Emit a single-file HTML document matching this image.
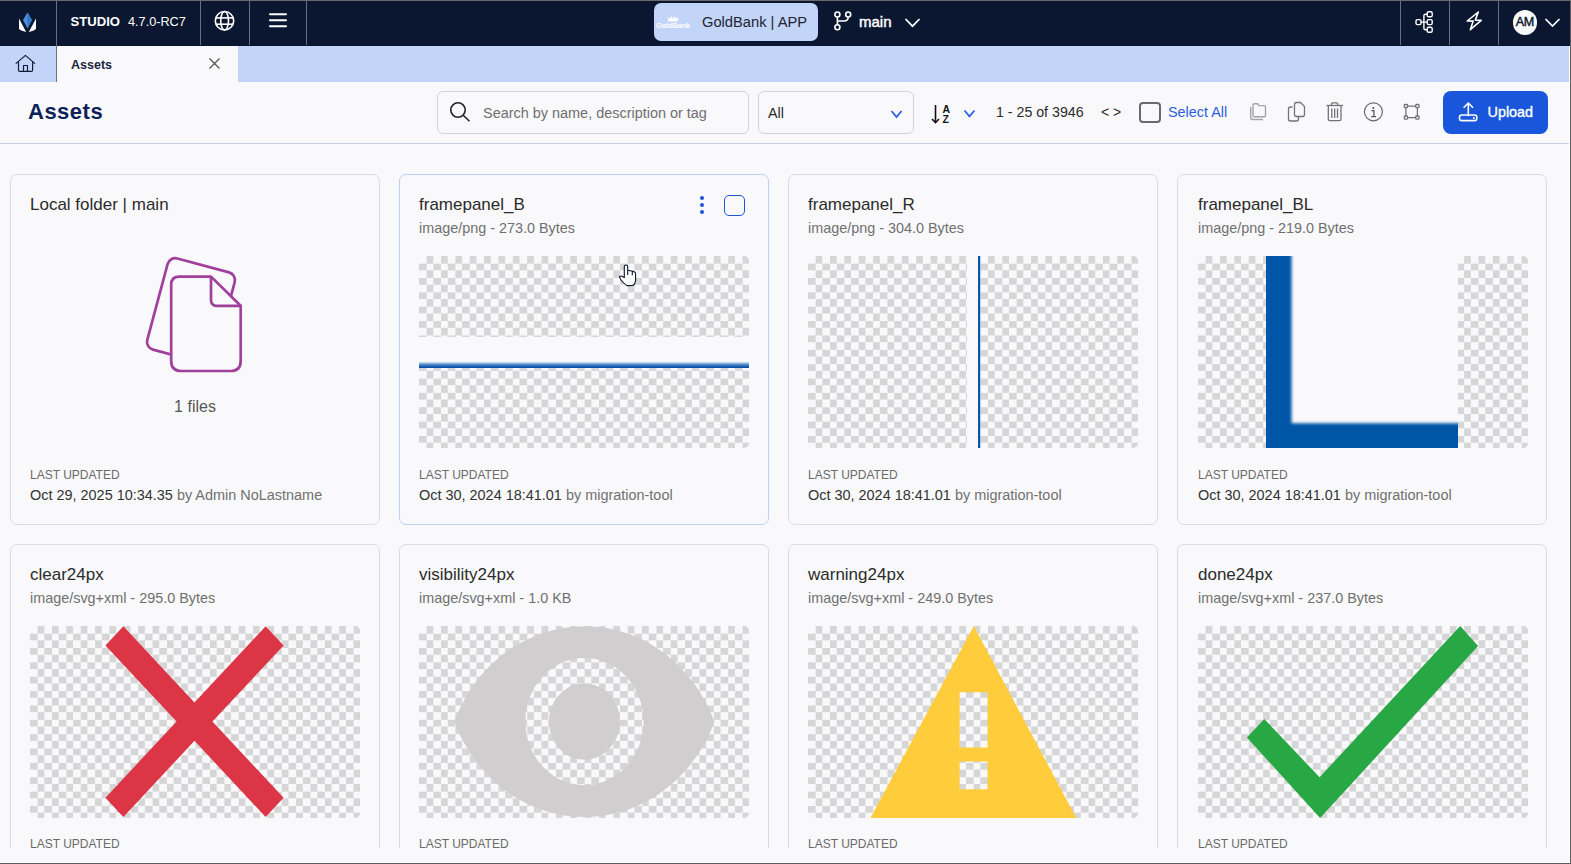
<!DOCTYPE html>
<html><head><meta charset="utf-8">
<style>
*{box-sizing:border-box;margin:0;padding:0}
html,body{width:1571px;height:864px;overflow:hidden;background:#f9f9fb;font-family:"Liberation Sans",sans-serif;color:#2b2b2b}
#frame{position:absolute;left:0;top:0;width:1571px;height:864px;border-top:1px solid #6a6a6a;border-right:1px solid #5e5e5e;border-bottom:1px solid #5e5e5e;pointer-events:none;z-index:50}
#frame2{position:absolute;left:0;top:46px;width:1570px;height:817px;border-right:1px solid #fff;border-bottom:1px solid #fff;pointer-events:none;z-index:49}
.abs{position:absolute}
#nav{position:absolute;left:0;top:0;width:1571px;height:46px;background:#0b1730}
.sep{position:absolute;top:0;width:1px;background:#6b6f78}
#tabs{position:absolute;left:0;top:46px;width:1571px;height:36px;background:#c2d4f8}
#hdr{position:absolute;left:0;top:82px;width:1571px;height:62px;border-bottom:1px solid #c9d2e6}
.card{position:absolute;width:370px;height:351px;border:1px solid #dcdce0;border-radius:7px;background:#f9f9fb}
.card .t{position:absolute;left:19px;top:20px;font-size:17px;color:#2b2b2b;white-space:nowrap}
.card .s{position:absolute;left:19px;top:44.5px;font-size:14.4px;color:#707070;white-space:nowrap}
.card .pv{position:absolute;left:9px;top:81px;width:330px;height:192px;border-radius:5px;overflow:hidden;
 background-color:#f9f9fb;
 background-image:linear-gradient(45deg,#d6d6d6 25%,transparent 25%,transparent 75%,#d6d6d6 75%),linear-gradient(45deg,#d6d6d6 25%,transparent 25%,transparent 75%,#d6d6d6 75%);
}
.card .lu{position:absolute;left:19px;top:293px;font-size:12px;color:#6a6a6a;white-space:nowrap}
.card .d{position:absolute;left:19px;top:311.5px;font-size:14.45px;color:#333;white-space:nowrap}
.card .d span{color:#707070}
.pvw{position:absolute;width:330px;height:192px;border-radius:5px;overflow:hidden;z-index:2}
.pvw svg{display:block}
.kb{position:absolute;left:300px;top:21px;width:4px;height:18px}
.kb i{display:block;width:4px;height:4px;border-radius:50%;background:#1a56db;margin-bottom:3px}
.cb{position:absolute;left:324px;top:20px;width:21px;height:21px;border:1.6px solid #1a56db;border-radius:5px}
#scroll{position:absolute;left:0;top:144px;width:1569px;height:704px;overflow:hidden}
</style></head><body>
<div id="nav">
  <div class="sep" style="left:56px;height:82px"></div>
  <div class="sep" style="left:200px;height:45px"></div>
  <div class="sep" style="left:249px;height:45px"></div>
  <div class="sep" style="left:306px;height:45px"></div>
  <div class="sep" style="left:1400px;height:45px"></div>
  <div class="sep" style="left:1449px;height:45px"></div>
  <div class="sep" style="left:1498px;height:45px"></div>
  <div class="abs" style="left:70.5px;top:13.5px;font-size:13.1px;font-weight:bold;color:#fff;letter-spacing:0px">STUDIO</div>
  <div class="abs" style="left:128px;top:14.5px;font-size:12.7px;color:#fff">4.7.0-RC7</div>
  <div class="abs" style="left:654px;top:3px;width:164px;height:38px;border-radius:7px;background:#c2d4f8"></div>
  <div class="abs" style="left:656px;top:21px;width:34px;font-size:7.5px;font-weight:bold;color:#fff;letter-spacing:-0.2px;text-align:center">GoldBank</div>
  <div class="abs" style="left:702px;top:14px;font-size:14.7px;color:#1f2430;white-space:nowrap">GoldBank | APP</div>
  <div class="abs" style="left:859px;top:13px;font-size:15px;color:#fff;-webkit-text-stroke:0.45px #fff">main</div>
  <div class="abs" style="left:1512.5px;top:10px;width:24.5px;height:24.5px;border-radius:50%;background:#f9f9fb;color:#0b1730;font-size:12.6px;text-align:center;line-height:25px;letter-spacing:-0.4px;-webkit-text-stroke:0.4px #0b1730">AM</div>
</div>
<svg class="abs" style="left:0;top:0;z-index:5" width="1571" height="82" viewBox="0 0 1571 82">
  <!-- logo -->
  <polygon points="27.5,12.5 32,20 27.5,28.5 23,20" fill="#4a8fd8"/>
  <polygon points="27.5,12.5 32,20 27.5,28.5" fill="#3576c4"/>
  <path d="M19,18.5 L26.2,32 Q21,31 19,29 Z" fill="#fff"/>
  <path d="M36,18.5 L28.8,32 Q34,31 36,29 Z" fill="#fff"/>
  <!-- globe -->
  <g fill="none" stroke="#fff" stroke-width="1.6">
    <circle cx="224.5" cy="20.75" r="9.2"/>
    <ellipse cx="224.6" cy="20.75" rx="3.9" ry="9.2"/>
    <line x1="216" y1="17.9" x2="233" y2="17.9"/>
    <line x1="216" y1="24.2" x2="233" y2="24.2"/>
  </g>
  <!-- hamburger -->
  <g stroke="#fff" stroke-width="2" stroke-linecap="round">
    <line x1="270" y1="14.2" x2="286" y2="14.2"/>
    <line x1="270" y1="20.2" x2="286" y2="20.2"/>
    <line x1="270" y1="26.2" x2="286" y2="26.2"/>
  </g>
  <!-- crown -->
  <path d="M667.5,17 L670,19 L671.5,16 L673,19 L674.5,16 L676,19 L678.5,17 L677.5,21.5 L668.5,21.5 Z" fill="#fff"/>
  <!-- branch -->
  <g fill="none" stroke="#fff" stroke-width="1.6">
    <circle cx="837.4" cy="14.5" r="2.5"/>
    <circle cx="848.2" cy="14.5" r="2.5"/>
    <circle cx="837.4" cy="27.3" r="2.5"/>
    <line x1="837.4" y1="17" x2="837.4" y2="24.8"/>
    <path d="M848.2,17 Q848.2,21 844,21 L837.4,21"/>
  </g>
  <!-- chevron main -->
  <polyline points="905.5,19 912.5,26.2 919.5,19" fill="none" stroke="#fff" stroke-width="1.7"/>
  <!-- hierarchy -->
  <g fill="none" stroke="#fff" stroke-width="1.4">
    <rect x="1416" y="19.6" width="5" height="5" rx="1.4"/>
    <rect x="1427.2" y="11.8" width="5" height="5" rx="1.4"/>
    <rect x="1427.2" y="19.6" width="5" height="5" rx="1.4"/>
    <rect x="1427.2" y="27.3" width="5" height="5" rx="1.4"/>
    <path d="M1421,22.1 L1427.2,22.1 M1427.2,14.3 L1425.4,14.3 Q1423.9,14.3 1423.9,15.8 L1423.9,28.3 Q1423.9,29.8 1425.4,29.8 L1427.2,29.8"/>
  </g>
  <!-- lightning -->
  <path d="M1478.3,12 L1467.2,21 L1473.2,21.1 L1470.3,29.7 L1481.2,20.3 L1475.3,20.1 Z" fill="none" stroke="#fff" stroke-width="1.6" stroke-linejoin="round"/>
  <!-- avatar chevron -->
  <polyline points="1545.5,19 1552.5,26 1559.5,19" fill="none" stroke="#fff" stroke-width="1.7"/>
  <!-- home -->
  <g fill="none" stroke="#141c33" stroke-width="1.15" stroke-linejoin="round" stroke-linecap="round">
    <path d="M16.1,63.4 L25.45,55.4 L34.7,63.4"/>
    <path d="M18.5,62 L18.5,70.2 Q18.5,71.3 19.6,71.3 L31.5,71.3 Q32.6,71.3 32.6,70.2 L32.6,62"/>
    <path d="M23.5,71.3 L23.5,65.5 L27.5,65.5 L27.5,71.3"/>
  </g>
</svg>
<div id="tabs">
  <div class="abs" style="left:57px;top:0;width:181px;height:36px;background:#f9f9fb"></div><div class="abs" style="left:56px;top:0;width:1px;height:36px;background:#6b6f78"></div>
  <div class="abs" style="left:71px;top:11.5px;font-size:12.5px;font-weight:bold;color:#1b2540">Assets</div>
  <svg class="abs" style="left:208px;top:11px" width="13" height="13" viewBox="0 0 13 13"><path d="M1.5,1.5 L11.5,11.5 M11.5,1.5 L1.5,11.5" stroke="#555" stroke-width="1.3"/></svg>
</div>
<div id="hdr">
  <div class="abs" style="left:28px;top:17px;font-size:22px;font-weight:bold;color:#0c2159;letter-spacing:0.5px">Assets</div>
  <div class="abs" style="left:437px;top:9px;width:312px;height:43px;border:1px solid #d4d4d8;border-radius:6px"></div>
  <div class="abs" style="left:483px;top:23px;font-size:14.45px;color:#6f6f73;white-space:nowrap">Search by name, description or tag</div>
  <div class="abs" style="left:758px;top:9px;width:156px;height:43px;border:1px solid #d4d4d8;border-radius:6px"></div>
  <div class="abs" style="left:768px;top:23px;font-size:14.3px;color:#2b2b2b">All</div>
  <div class="abs" style="left:996px;top:22px;font-size:14.2px;color:#2b2b2b;white-space:nowrap">1 - 25 of 3946</div>
  <div class="abs" style="left:1101px;top:22px;font-size:14px;color:#2b2b2b;white-space:nowrap">&lt; &gt;</div>
  <div class="abs" style="left:1139px;top:20px;width:22px;height:21px;border:2px solid #6a6a6a;border-radius:4px"></div>
  <div class="abs" style="left:1168px;top:22px;font-size:14.4px;color:#2b5fe0;white-space:nowrap">Select All</div>
  <div class="abs" style="left:1443px;top:9px;width:105px;height:43px;border-radius:8px;background:#1a56db"></div>
  <div class="abs" style="left:1487.5px;top:22px;font-size:14.4px;color:#fff;-webkit-text-stroke:0.35px #fff">Upload</div>
</div>
<svg class="abs" style="left:0;top:82px;z-index:5" width="1571" height="62" viewBox="0 82 1571 62">
  <!-- search icon -->
  <g fill="none" stroke="#1f2430" stroke-width="1.6">
    <circle cx="458" cy="110" r="7.2"/>
    <line x1="463.2" y1="115.2" x2="469.5" y2="121.3"/>
  </g>
  <!-- select chevron -->
  <polyline points="891.5,111 896.5,117 901.5,111" fill="none" stroke="#2a62e0" stroke-width="1.8"/>
  <!-- sort icon -->
  <g fill="none" stroke="#111" stroke-width="1.6">
    <line x1="935.5" y1="105" x2="935.5" y2="122.5"/>
    <polyline points="932,119 935.5,122.7 939,119"/>
  </g>
  <text x="942.5" y="112.8" font-family="Liberation Sans" font-weight="bold" font-size="10.5" fill="#111">A</text>
  <text x="942.5" y="122.9" font-family="Liberation Sans" font-weight="bold" font-size="10.5" fill="#111">Z</text>
  <polyline points="964.5,110.5 969.5,116.3 974.5,110.5" fill="none" stroke="#2a62e0" stroke-width="1.8"/>
  <!-- folder stack (disabled) -->
  <g fill="none" stroke="#a3a3a3" stroke-width="1.4">
    <path d="M1253,105 Q1253,103.8 1254.2,103.8 L1257.5,103.8 L1259,105.6 L1264.3,105.6 Q1265.5,105.6 1265.5,106.8 L1265.5,115.5 Q1265.5,116.7 1264.3,116.7 L1254.2,116.7 Q1253,116.7 1253,115.5 Z"/>
    <path d="M1250.7,107 L1250.7,117.5 Q1250.7,119.5 1252.7,119.5 L1263,119.5"/>
  </g>
  <!-- duplicate -->
  <g fill="none" stroke="#737373" stroke-width="1.3">
    <path d="M1294.5,104.5 Q1294.5,102.5 1296.5,102.5 L1300.5,102.5 L1304.5,106.5 L1304.5,114.5 Q1304.5,116.5 1302.5,116.5 L1296.5,116.5 Q1294.5,116.5 1294.5,114.5 Z"/>
    <path d="M1292.5,107 L1290.5,107 Q1288.5,107 1288.5,109 L1288.5,119 Q1288.5,121 1290.5,121 L1296.5,121 Q1298.5,121 1298.5,119 L1298.5,117"/>
  </g>
  <!-- trash -->
  <g fill="none" stroke="#737373" stroke-width="1.3">
    <line x1="1326.5" y1="105.5" x2="1342.8" y2="105.5"/>
    <path d="M1331.5,105.5 L1331.5,104 Q1331.5,102.8 1332.7,102.8 L1336.6,102.8 Q1337.8,102.8 1337.8,104 L1337.8,105.5"/>
    <path d="M1328.3,105.5 L1328.3,119 Q1328.3,120.7 1330,120.7 L1339.3,120.7 Q1341,120.7 1341,119 L1341,105.5"/>
    <line x1="1331.8" y1="108.5" x2="1331.8" y2="118"/>
    <line x1="1334.65" y1="108.5" x2="1334.65" y2="118"/>
    <line x1="1337.5" y1="108.5" x2="1337.5" y2="118"/>
  </g>
  <!-- info -->
  <circle cx="1373.4" cy="111.8" r="9" fill="none" stroke="#6a6a6a" stroke-width="1.2"/>
  <circle cx="1373.3" cy="108.1" r="1.05" fill="#555"/>
  <path d="M1371.4,110.6 L1373.9,110.6 L1373.9,116.3 M1371.2,116.6 L1376,116.6" fill="none" stroke="#555" stroke-width="1.25"/>
  <!-- bbox -->
  <g fill="none" stroke="#737373" stroke-width="1.3">
    <rect x="1404.3" y="104.5" width="3.2" height="3.2" rx="0.8"/>
    <rect x="1415.8" y="104.5" width="3.2" height="3.2" rx="0.8"/>
    <rect x="1404.3" y="116" width="3.2" height="3.2" rx="0.8"/>
    <rect x="1415.8" y="116" width="3.2" height="3.2" rx="0.8"/>
    <path d="M1407.5,106.1 L1415.8,106.1 M1407.5,117.6 L1415.8,117.6 M1405.9,107.7 L1405.9,116 M1417.4,107.7 L1417.4,116"/>
  </g>
  <!-- upload -->
  <g fill="none" stroke="#fff" stroke-width="1.6" stroke-linejoin="round">
    <path d="M1468.3,116.2 L1468.3,103 M1463.6,107.8 L1468.3,103 L1473,107.8"/>
    <rect x="1459.5" y="115" width="17.3" height="5.6" rx="2.2"/>
  </g>
  <circle cx="1473.8" cy="117.9" r="1" fill="#fff"/>
</svg>
<div id="scroll"><div style="position:absolute;left:0;top:-144px;width:1571px;height:864px"><div class="card" style="left:10px;top:174px;border-color:#dcdce0"><div class="t">Local folder | main</div><div class="lu">LAST UPDATED</div><div class="d">Oct 29, 2025 10:34.35 <span>by Admin NoLastname</span></div></div><svg class="abs" style="left:10px;top:174px;z-index:2" width="370" height="351" viewBox="10 174 370 351">
<g fill="none" stroke="#a0409c" stroke-width="2.7" stroke-linejoin="round">
<rect x="-34.75" y="-47.2" width="69.5" height="94.4" rx="8" transform="translate(191,311) rotate(15)"/>
<path d="M179.2,276.6 L211,276.6 L240.7,305.8 L240.7,361 Q240.7,371 230.7,371 L181.2,371 Q171.2,371 171.2,361 L171.2,284.6 Q171.2,276.6 179.2,276.6 Z" fill="#f9f9fb"/>
<path d="M211,276.6 L211,300 Q211,305.8 216.8,305.8 L240.7,305.8"/>
</g></svg><div class="abs" style="left:10px;top:398px;width:370px;text-align:center;font-size:16px;color:#555;z-index:3">1 files</div>
<div class="card" style="left:399px;top:174px;border-color:#bccff5"><div class="t">framepanel_B</div><div class="s">image/png - 273.0 Bytes</div><div class="kb"><i></i><i></i><i></i></div><div class="cb"></div><div class="lu">LAST UPDATED</div><div class="d">Oct 30, 2024 18:41.01 <span>by migration-tool</span></div></div><div class="pvw" style="left:419px;top:256px"><svg width="330" height="192" viewBox="419 256 330 192"><defs><pattern id="ck1" patternUnits="userSpaceOnUse" x="419" y="256" width="14.36" height="14.36"><rect x="7.63" y="0.45" width="6.7299999999999995" height="6.7299999999999995" fill="#d6d6d6" shape-rendering="crispEdges"/><rect x="0.45" y="7.63" width="6.7299999999999995" height="6.7299999999999995" fill="#d6d6d6" shape-rendering="crispEdges"/></pattern></defs><rect x="419" y="256" width="330" height="192" fill="url(#ck1)"/><rect x="419" y="337" width="330" height="25" fill="#f9f9fb"/><defs><linearGradient id="gB" x1="0" y1="0" x2="0" y2="1"><stop offset="0" stop-color="#d8e6f5"/><stop offset="0.5" stop-color="#3d7cc4"/><stop offset="1" stop-color="#0048a0"/></linearGradient></defs><rect x="419" y="362" width="330" height="6" fill="url(#gB)"/></svg></div>
<div class="card" style="left:788px;top:174px;border-color:#dcdce0"><div class="t">framepanel_R</div><div class="s">image/png - 304.0 Bytes</div><div class="lu">LAST UPDATED</div><div class="d">Oct 30, 2024 18:41.01 <span>by migration-tool</span></div></div><div class="pvw" style="left:808px;top:256px"><svg width="330" height="192" viewBox="808 256 330 192"><defs><pattern id="ck2" patternUnits="userSpaceOnUse" x="808" y="256" width="14.36" height="14.36"><rect x="7.63" y="0.45" width="6.7299999999999995" height="6.7299999999999995" fill="#d6d6d6" shape-rendering="crispEdges"/><rect x="0.45" y="7.63" width="6.7299999999999995" height="6.7299999999999995" fill="#d6d6d6" shape-rendering="crispEdges"/></pattern></defs><rect x="808" y="256" width="330" height="192" fill="url(#ck2)"/><rect x="967" y="256" width="11" height="192" fill="#f9f9fb"/><rect x="978" y="256" width="2.2" height="192" fill="#0a55a8"/></svg></div>
<div class="card" style="left:1177px;top:174px;border-color:#dcdce0"><div style="position:absolute;left:1px;top:0;width:100%;height:100%"><div class="t">framepanel_BL</div><div class="s">image/png - 219.0 Bytes</div><div class="lu">LAST UPDATED</div><div class="d">Oct 30, 2024 18:41.01 <span>by migration-tool</span></div></div></div><div class="pvw" style="left:1198px;top:256px"><svg width="330" height="192" viewBox="1198 256 330 192"><defs><pattern id="ck3" patternUnits="userSpaceOnUse" x="1198" y="256" width="14.36" height="14.36"><rect x="7.63" y="0.45" width="6.7299999999999995" height="6.7299999999999995" fill="#d6d6d6" shape-rendering="crispEdges"/><rect x="0.45" y="7.63" width="6.7299999999999995" height="6.7299999999999995" fill="#d6d6d6" shape-rendering="crispEdges"/></pattern></defs><rect x="1198" y="256" width="330" height="192" fill="url(#ck3)"/><defs><filter id="fb" x="-20%" y="-20%" width="140%" height="140%"><feGaussianBlur stdDeviation="1.6"/></filter><clipPath id="cBL"><rect x="1266" y="256" width="192" height="192"/></clipPath></defs><g clip-path="url(#cBL)"><rect x="1266" y="256" width="192" height="192" fill="#0056a6"/><rect x="1291.6" y="230" width="200" height="193.2" fill="#f9f9fb" filter="url(#fb)"/></g></svg></div>
<div class="card" style="left:10px;top:544px;border-color:#dcdce0"><div class="t">clear24px</div><div class="s">image/svg+xml - 295.0 Bytes</div><div class="lu" style="top:292px">LAST UPDATED</div></div><div class="pvw" style="left:30px;top:626px"><svg width="330" height="192" viewBox="30 626 330 192"><defs><pattern id="ck4" patternUnits="userSpaceOnUse" x="30" y="626" width="14.36" height="14.36"><rect x="7.63" y="0.45" width="6.7299999999999995" height="6.7299999999999995" fill="#d6d6d6" shape-rendering="crispEdges"/><rect x="0.45" y="7.63" width="6.7299999999999995" height="6.7299999999999995" fill="#d6d6d6" shape-rendering="crispEdges"/></pattern></defs><rect x="30" y="626" width="330" height="192" fill="url(#ck4)"/><polygon points="283.60,645.42 265.65,626.20 194.50,702.38 123.35,626.20 105.40,645.42 176.55,721.60 105.40,797.78 123.35,817.00 194.50,740.82 265.65,817.00 283.60,797.78 212.45,721.60" fill="#dc3545"/></svg></div>
<div class="card" style="left:399px;top:544px;border-color:#dcdce0"><div class="t">visibility24px</div><div class="s">image/svg+xml - 1.0 KB</div><div class="lu" style="top:292px">LAST UPDATED</div></div><div class="pvw" style="left:419px;top:626px"><svg width="330" height="192" viewBox="419 626 330 192"><defs><pattern id="ck5" patternUnits="userSpaceOnUse" x="419" y="626" width="14.36" height="14.36"><rect x="7.63" y="0.45" width="6.7299999999999995" height="6.7299999999999995" fill="#d6d6d6" shape-rendering="crispEdges"/><rect x="0.45" y="7.63" width="6.7299999999999995" height="6.7299999999999995" fill="#d6d6d6" shape-rendering="crispEdges"/></pattern></defs><rect x="419" y="626" width="330" height="192" fill="url(#ck5)"/><svg x="454.4" y="626.2" width="260.2" height="190.8" viewBox="1 4.5 22 15" preserveAspectRatio="none"><path fill="#d0cece" fill-rule="evenodd" d="M12 4.5C7 4.5 2.73 7.61 1 12c1.73 4.39 6 7.5 11 7.5s9.27-3.11 11-7.5c-1.73-4.39-6-7.5-11-7.5zM12 17c-2.76 0-5-2.240-5-5s2.24-5 5-5 5 2.24 5 5-2.24 5-5 5zm0-8c-1.66 0-3 1.34-3 3s1.34 3 3 3 3-1.34 3-3-1.34-3-3-3z"/></svg></svg></div>
<div class="card" style="left:788px;top:544px;border-color:#dcdce0"><div class="t">warning24px</div><div class="s">image/svg+xml - 249.0 Bytes</div><div class="lu" style="top:292px">LAST UPDATED</div></div><div class="pvw" style="left:808px;top:626px"><svg width="330" height="192" viewBox="808 626 330 192"><defs><pattern id="ck6" patternUnits="userSpaceOnUse" x="808" y="626" width="14.36" height="14.36"><rect x="7.63" y="0.45" width="6.7299999999999995" height="6.7299999999999995" fill="#d6d6d6" shape-rendering="crispEdges"/><rect x="0.45" y="7.63" width="6.7299999999999995" height="6.7299999999999995" fill="#d6d6d6" shape-rendering="crispEdges"/></pattern></defs><rect x="808" y="626" width="330" height="192" fill="url(#ck6)"/><path fill="#ffcd3c" fill-rule="evenodd" d="M973.8,626 L1076.3,818 L870.4,818 Z M959.6,692.2 L987.5,692.2 L987.5,747.4 L959.6,747.4 Z M959.6,761.4 L987.5,761.4 L987.5,789.3 L959.6,789.3 Z"/></svg></div>
<div class="card" style="left:1177px;top:544px;border-color:#dcdce0"><div style="position:absolute;left:1px;top:0;width:100%;height:100%"><div class="t">done24px</div><div class="s">image/svg+xml - 237.0 Bytes</div><div class="lu" style="top:292px">LAST UPDATED</div></div></div><div class="pvw" style="left:1198px;top:626px"><svg width="330" height="192" viewBox="1198 626 330 192"><defs><pattern id="ck7" patternUnits="userSpaceOnUse" x="1198" y="626" width="14.36" height="14.36"><rect x="7.63" y="0.45" width="6.7299999999999995" height="6.7299999999999995" fill="#d6d6d6" shape-rendering="crispEdges"/><rect x="0.45" y="7.63" width="6.7299999999999995" height="6.7299999999999995" fill="#d6d6d6" shape-rendering="crispEdges"/></pattern></defs><rect x="1198" y="626" width="330" height="192" fill="url(#ck7)"/><polygon fill="#28a745" points="1246.9,737.4 1264.3,719 1319.6,777.2 1460.2,626 1478.1,646.1 1320.1,818"/></svg></div></div></div><!--endscroll-->
<svg class="abs" style="left:612px;top:258px;z-index:20" width="30" height="32" viewBox="612 258 30 32">
<path d="M619.4,276.8 Q620.5,275.6 622,276.3 L624.3,277.6 L624.3,266.6 Q624.3,265 626,265 Q627.7,265 627.7,266.6 L627.7,270.3 L632.5,271.2 L634.6,272 Q635.6,272.6 635.6,274 L635.6,280.5 Q635.3,283.6 633,285.5 L627,285.6 Q623.3,283.2 621,280 Z" fill="#fff" stroke="#0b1730" stroke-width="1.1" stroke-linejoin="round"/>
<path d="M627.7,270.3 L627.7,275 M632.3,271.2 L632.3,275.2" stroke="#0b1730" stroke-width="1.1" fill="none"/>
</svg>
<div id="frame2"></div><div id="frame"></div>
</body></html>
